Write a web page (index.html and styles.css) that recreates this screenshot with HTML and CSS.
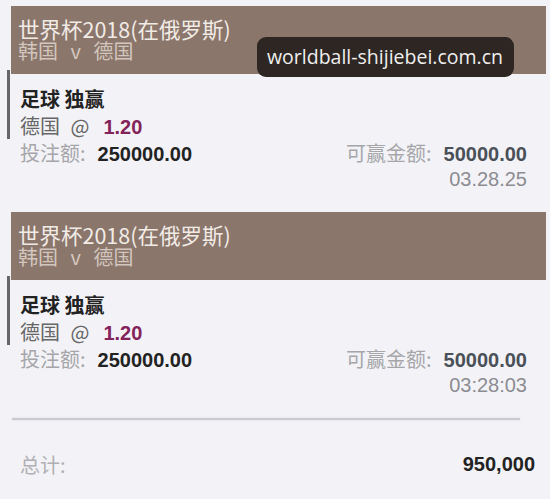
FILE: index.html
```html
<!DOCTYPE html>
<html>
    <head>
        <meta charset="utf-8">
        <link rel="stylesheet" href="styles.css">
    </head>
    <body>
        <div id="slip">
            <div class="card">
                <div class="card-head">
                    <div class="league">世界杯2018(在俄罗斯)</div>
                    <div class="match">韩国 <span class="vs">v</span> 德国</div>
                </div>
                <div class="pick">
                    <div class="row market">足球 独赢</div>
                    <div class="row sel">德国 <span class="at">@</span><span class="odds">1.20</span></div>
                </div>
                <div class="amounts">
                    <div class="row split">
                        <span><span class="lbl">投注额:</span><b class="num">250000.00</b></span>
                        <span><span class="lbl">可赢金额:</span><b class="num win">50000.00</b></span>
                    </div>
                    <div class="row time">03.28.25</div>
                </div>
            </div>

            <div class="card">
                <div class="card-head">
                    <div class="league">世界杯2018(在俄罗斯)</div>
                    <div class="match">韩国 <span class="vs">v</span> 德国</div>
                </div>
                <div class="pick">
                    <div class="row market">足球 独赢</div>
                    <div class="row sel">德国 <span class="at">@</span><span class="odds">1.20</span></div>
                </div>
                <div class="amounts">
                    <div class="row split">
                        <span><span class="lbl">投注额:</span><b class="num">250000.00</b></span>
                        <span><span class="lbl">可赢金额:</span><b class="num win">50000.00</b></span>
                    </div>
                    <div class="row time">03:28:03</div>
                </div>
            </div>

            <div class="divider"></div>

            <div class="total">
                <span class="lbl">总计:</span>
                <b class="num">950,000</b>
            </div>
        </div>

        <div class="stamp">worldball-shijiebei.com.cn</div>
    </body>
</html>
```

FILE: styles.css
```css
body{
    margin:0;
    background-color: #f3f3f7;
    font-family: "Noto Sans CJK SC", "Noto Sans", sans-serif;
    font-size: 20px;
    color: #333;
}
#slip{
    padding-top:6px;
}
.card{
    margin: 0 4px 19px 11px;
}
.card-head{
    background-color: #8b766b;
    padding: 12px 7px 12px 7px;
    line-height: 22px;
    font-size: 20px;
}
.league{
    color: #f1ebe6;
    font-size: 21.5px;
}
.match{
    color: #d2c6be;
}
.vs{
    margin: 0 8px;
}
.row{
    height:27px;
    line-height:27px;
    white-space: nowrap;
}
.pick{
    margin-top:-4px;
    margin-left:-4px;
    padding: 15px 0 0 10px;
    border-left: 3px solid #66666a;
}
.market{
    font-weight: bold;
    color: #222;
}
.sel{
    color: #666;
}
.at{
    margin: 0 14px 0 6px;
}
.odds{
    font-family: "Liberation Sans", Arial, sans-serif;
    font-weight: bold;
    font-size: 20px;
    color: #84225a;
}
.amounts{
    padding: 0 19px 0 9px;
}
.split{
    display:flex;
    justify-content: space-between;
}
.lbl{
    color: #a6a6aa;
    margin-right: 12px;
}
.num{
    font-family: "Liberation Sans", Arial, sans-serif;
    font-size: 20px;
    color: #222;
}
.win{
    color: #4a5058;
}
.time{
    text-align: right;
    font-family: "Liberation Sans", Arial, sans-serif;
    font-size: 20px;
    color: #8c8c92;
}
.divider{
    margin: 0 30px 0 12px;
    height: 2px;
    background-color: #c9c9cf;
    box-shadow: 0 0 2px #d4d4d8;
}
.total{
    display:flex;
    justify-content: space-between;
    align-items: center;
    padding: 0 15px 0 20px;
    height: 88px;
}
.total .lbl{
    color: #b0b0b4;
}

/* site watermark over the first header */
.stamp{
    position:absolute;
    left:257px;
    top:37px;
    width:257px;
    height:40px;
    line-height:40px;
    box-sizing: border-box;
    padding-left:10px;
    background-color: #2d2622;
    border-radius: 9px;
    color: #f0eeee;
    font-family: "Open Sans", sans-serif;
    font-size: 19.5px;
    white-space: nowrap;
}
```
